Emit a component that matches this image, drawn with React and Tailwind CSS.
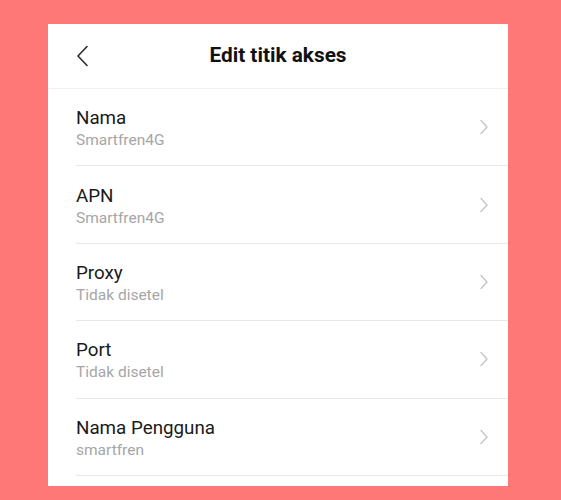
import React from 'react';

const rows = [
    { label: 'Nama', value: 'Smartfren4G' },
    { label: 'APN', value: 'Smartfren4G' },
    { label: 'Proxy', value: 'Tidak disetel' },
    { label: 'Port', value: 'Tidak disetel' },
    { label: 'Nama Pengguna', value: 'smartfren' },
];

function BackIcon() {
    return (
        <svg width="14" height="22" viewBox="0 0 14 22" fill="none">
            <path d="M11 1.5 L2 11 L11 20.5" stroke="#2b2b2b" strokeWidth="1.6" strokeLinecap="round" strokeLinejoin="round" />
        </svg>
    );
}

function ChevronRight() {
    return (
        <svg width="10" height="16" viewBox="0 0 10 16" fill="none">
            <path d="M2 1.5 L8 8 L2 14.5" stroke="#c6c6c6" strokeWidth="1.4" strokeLinecap="round" strokeLinejoin="round" />
        </svg>
    );
}

export default function App() {
    return (
        <div className="min-h-[500px] w-full bg-[#ff7878] pt-[24px]" style={{ fontFamily: 'Roboto, "Noto Sans", sans-serif' }}>
            <div className="ml-[48px] h-[462px] w-[460px] bg-white">
                {/* Header */}
                <div className="relative flex h-[65px] items-center justify-center border-b border-[#f0f0f0]">
                    <div className="absolute left-[28px] top-[21px]">
                        <BackIcon />
                    </div>
                    <h1 className="text-[20.8px] font-bold text-[#111]">Edit titik akses</h1>
                </div>

                {/* Rows */}
                <div>
                    {rows.map((row) => (
                        <div key={row.label} className="ml-[28px] flex h-[77.4px] items-center justify-between border-b border-[#e8e8e8] pr-[19px]">
                            <div className="flex flex-col pt-[2px]">
                                <span className="text-[18.8px] leading-[24px] text-[#1a1a1a]">{row.label}</span>
                                <span className="text-[15.5px] leading-[20px] text-[#a6a6a6]">{row.value}</span>
                            </div>
                            <ChevronRight />
                        </div>
                    ))}
                </div>
            </div>
        </div>
    );
}
